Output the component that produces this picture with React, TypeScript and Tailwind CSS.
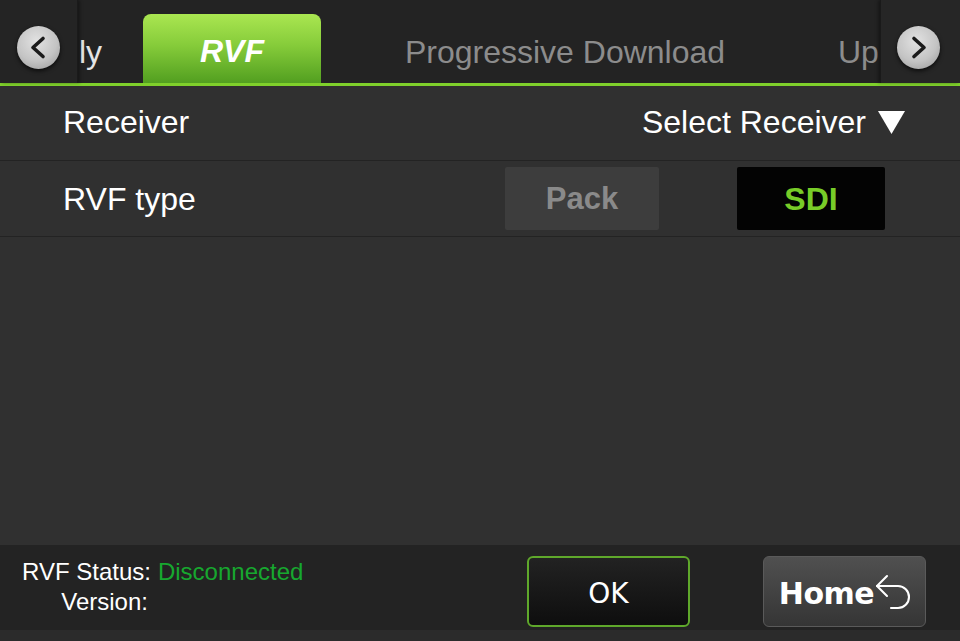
import React from "react";

function CircleArrow({ dir }: { dir: "left" | "right" }) {
  return (
    <div className="w-[43px] h-[43px] rounded-full bg-[radial-gradient(circle_at_45%_35%,#e2e2e2_0%,#c4c4c4_55%,#959595_100%)] shadow-[0_2px_4px_rgba(0,0,0,0.7)] flex items-center justify-center">
      <svg width="43" height="43" viewBox="0 0 43 43" fill="none">
        {dir === "left" ? (
          <path d="M26 12.5 L16 21.5 L26 30.5" stroke="#1b1b1b" strokeWidth="3.6" strokeLinecap="round" strokeLinejoin="round" />
        ) : (
          <path d="M17 12.5 L27 21.5 L17 30.5" stroke="#1b1b1b" strokeWidth="3.6" strokeLinecap="round" strokeLinejoin="round" />
        )}
      </svg>
    </div>
  );
}

export default function App() {
  return (
    <div className="w-[960px] h-[641px] flex flex-col bg-[#303030] overflow-hidden font-['Liberation_Sans',Arial,sans-serif]">
      {/* Header */}
      <div className="h-[83px] flex bg-[#232323] shrink-0">
        <div className="w-[78px] h-full flex items-center justify-center pt-[11px] bg-[#242424] border-r border-[#1a1a1a] shadow-[2px_0_3px_rgba(0,0,0,0.35)] z-10">
          <CircleArrow dir="left" />
        </div>
        <div className="flex-1 flex items-end overflow-hidden">
          <div className="w-[65px] h-[69px] shrink-0 flex items-center pt-[6px] pl-[1px] text-[32px] text-[#e4e4e4] leading-none">
            ly
          </div>
          <div className="w-[178px] h-[69px] shrink-0 rounded-t-[8px] bg-[linear-gradient(to_bottom,#aae651_0%,#86cc3a_45%,#529f20_100%)] flex items-center justify-center pt-[5px] text-[32px] font-bold italic text-white leading-none">
            RVF
          </div>
          <div className="w-[488px] h-[69px] shrink-0 flex items-center justify-center pt-[6px] text-[32px] text-[#8c8c8c] leading-none">
            Progressive Download
          </div>
          <div className="h-[69px] shrink-0 flex items-center pt-[6px] ml-[29px] text-[32px] text-[#8c8c8c] leading-none whitespace-nowrap">
            Up
          </div>
        </div>
        <div className="w-[80px] h-full flex items-center justify-center pt-[11px] pr-[4px] bg-[#262626] border-l border-[#1a1a1a] shadow-[-2px_0_3px_rgba(0,0,0,0.35)] z-10">
          <CircleArrow dir="right" />
        </div>
      </div>
      <div className="h-[3px] bg-[#7fd02b] shrink-0" />

      {/* Receiver row */}
      <div className="h-[75px] flex items-center justify-between pl-[63px] pr-[55px] border-b border-[#232323] shrink-0">
        <span className="text-[32px] text-white leading-none mb-[2px]">Receiver</span>
        <div className="flex items-center gap-[12px] mb-[2px]">
          <span className="text-[32px] text-white leading-none">Select Receiver</span>
          <svg width="27" height="23" viewBox="0 0 27 23">
            <path d="M0 0 L27 0 L13.5 23 Z" fill="#ffffff" />
          </svg>
        </div>
      </div>

      {/* RVF type row */}
      <div className="h-[76px] flex items-center pl-[63px] pr-[75px] border-b border-[#232323] shrink-0">
        <span className="flex-1 text-[32px] text-white leading-none">RVF type</span>
        <div className="w-[154px] h-[63px] rounded-[2px] bg-[#3d3d3d] flex items-center justify-center text-[31px] font-bold text-[#8a8a8a] leading-none">
          Pack
        </div>
        <div className="w-[78px]" />
        <div className="w-[148px] h-[63px] rounded-[2px] bg-[#030303] flex items-center justify-center text-[32px] font-bold text-[#78cc28] leading-none">
          SDI
        </div>
      </div>

      <div className="flex-1" />

      {/* Bottom bar */}
      <div className="h-[85px] bg-[#232323] flex items-start pt-[11px] shrink-0">
        <div className="w-[527px] pl-[22px] pt-[1px]">
          <div className="grid grid-cols-[auto_auto] justify-start gap-x-[7px] text-[24px] leading-[30px]">
            <span className="text-right text-white">RVF Status:</span>
            <span className="text-[#17a82f]">Disconnected</span>
            <span className="text-right text-white pr-[3px]">Version:</span>
            <span />
          </div>
        </div>
        <div className="w-[163px] h-[71px] rounded-[6px] border-2 border-[#5fa82b] bg-[linear-gradient(to_bottom,#222222,#0e0e0e)] flex items-center justify-center font-['DejaVu_Sans',sans-serif] text-[28px] text-white leading-none pt-[4px]">
          OK
        </div>
        <div className="w-[73px]" />
        <div className="w-[163px] h-[71px] rounded-[6px] border border-[#5a5a5a] bg-[linear-gradient(to_bottom,#505050,#353535)] flex items-center justify-center font-['DejaVu_Sans',sans-serif] text-[30px] font-bold text-white leading-none">
          <span className="tracking-[-0.5px] pt-[4px]">Home</span>
          <svg width="48" height="48" viewBox="0 0 24 24" fill="none" stroke="#ffffff" strokeWidth="1.05" strokeLinecap="round" strokeLinejoin="round" className="ml-[-5px] mr-[-7px]">
            <path d="M9 14 4 9l5-5" />
            <path d="M4 9h10.5a5.5 5.5 0 0 1 5.5 5.5a5.5 5.5 0 0 1-5.5 5.5H11" />
          </svg>
        </div>
      </div>
      <div className="h-[11px] bg-[#2b2b2b] shrink-0" />
    </div>
  );
}
